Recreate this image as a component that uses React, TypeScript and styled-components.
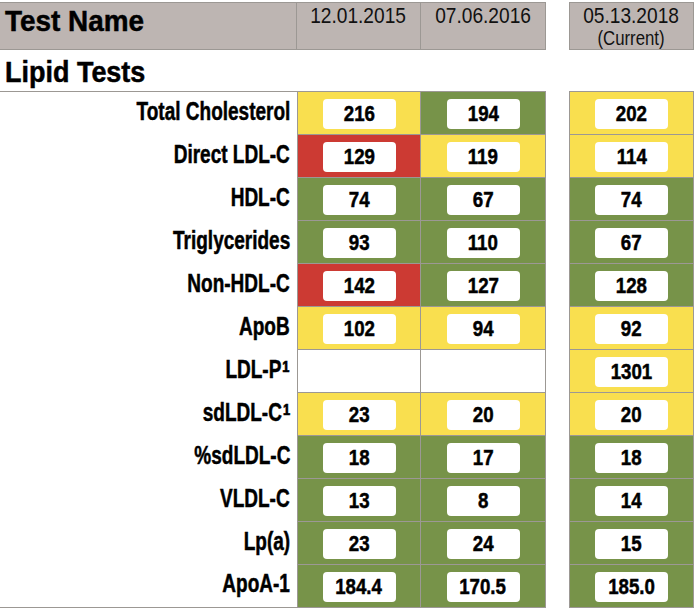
import React from "react";
import styled, { createGlobalStyle } from "styled-components";

const FONT = `"Liberation Sans", Arial, sans-serif`;
const LINE = "#9c9894";
const HEAD_BG = "#bdb5b2";

const colors: Record<string, string> = {
  y: "#f9df4f",
  g: "#779349",
  r: "#cc3a33",
  w: "#ffffff",
};

const Global = createGlobalStyle`
  html, body { margin: 0; padding: 0; background: #fff; }
  body { font-family: ${FONT}; color: #000; }
`;

/* Simulates the condensed face of the original by narrowing glyphs horizontally */
const Narrow = styled.span<{ $scale: number; $origin: string }>`
  display: inline-block;
  white-space: nowrap;
  transform: scaleX(${(p) => p.$scale});
  transform-origin: ${(p) => p.$origin} center;
`;

const Sup = styled.span`
  font-size: 31px;
  line-height: 0;
  vertical-align: -4px;
  margin-left: 1px;
`;

const Sheet = styled.div`
  width: 694px;
  height: 608px;
  overflow: hidden;
  padding-top: 2px;
  box-sizing: border-box;
  display: grid;
  grid-template-columns: 297px 124px 125px 23px 125px;
  grid-template-rows: 48px 42px repeat(12, 43px);
`;

const HeadTitle = styled.div`
  background: ${HEAD_BG};
  border-top: 1px solid ${LINE};
  border-bottom: 1px solid ${LINE};
  border-right: 1px solid ${LINE};
  box-sizing: border-box;
  font-weight: 700;
  font-size: 30px;
  line-height: 33px;
  padding: 1px 0 0 5px;
  -webkit-text-stroke: 0.5px #000;
`;

const HeadDate = styled.div<{ $first?: boolean }>`
  background: ${HEAD_BG};
  border-top: 1px solid ${LINE};
  border-bottom: 1px solid ${LINE};
  border-right: 1px solid ${LINE};
  border-left: ${(p) => (p.$first ? `1px solid ${LINE}` : "none")};
  box-sizing: border-box;
  font-size: 22px;
  line-height: 22px;
  padding-top: 2px;
  display: flex;
  flex-direction: column;
  align-items: center;
  color: #111;
`;

const SubNote = styled.div`
  font-size: 19.5px;
  line-height: 22px;
`;

const Spacer = styled.div``;

const Section = styled.div<{ $span: string }>`
  grid-column: ${(p) => p.$span};
  border-bottom: 1px solid ${LINE};
  box-sizing: border-box;
  font-weight: 700;
  font-size: 29px;
  line-height: 32px;
  padding: 6px 0 0 5px;
  -webkit-text-stroke: 0.5px #000;
`;

const Label = styled.div<{ $last?: boolean }>`
  display: flex;
  align-items: center;
  justify-content: flex-end;
  padding-right: 7px;
  padding-bottom: 5px;
  box-sizing: border-box;
  font-weight: 700;
  font-size: 25px;
  -webkit-text-stroke: 0.5px #000;
  border-bottom: ${(p) => (p.$last ? `1px solid ${LINE}` : "none")};
`;

const Cell = styled.div<{ $bg: string; $left?: boolean }>`
  background: ${(p) => p.$bg};
  border-right: 1px solid ${LINE};
  border-bottom: 1px solid ${LINE};
  border-left: ${(p) => (p.$left ? `1px solid ${LINE}` : "none")};
  box-sizing: border-box;
  display: flex;
  align-items: center;
  justify-content: center;
`;

const Value = styled.div`
  width: 73px;
  height: 30px;
  margin-top: 1px;
  background: #fff;
  border-radius: 4px;
  display: flex;
  align-items: center;
  justify-content: center;
  font-weight: 700;
  font-size: 22px;
  -webkit-text-stroke: 0.5px #000;
`;

type Row = { name: string; note?: boolean; vals: [string, string][] };

const rows: Row[] = [
  { name: "Total Cholesterol", vals: [["y", "216"], ["g", "194"], ["y", "202"]] },
  { name: "Direct LDL-C", vals: [["r", "129"], ["y", "119"], ["y", "114"]] },
  { name: "HDL-C", vals: [["g", "74"], ["g", "67"], ["g", "74"]] },
  { name: "Triglycerides", vals: [["g", "93"], ["g", "110"], ["g", "67"]] },
  { name: "Non-HDL-C", vals: [["r", "142"], ["g", "127"], ["g", "128"]] },
  { name: "ApoB", vals: [["y", "102"], ["y", "94"], ["y", "92"]] },
  { name: "LDL-P", note: true, vals: [["w", ""], ["w", ""], ["y", "1301"]] },
  { name: "sdLDL-C", note: true, vals: [["y", "23"], ["y", "20"], ["y", "20"]] },
  { name: "%sdLDL-C", vals: [["g", "18"], ["g", "17"], ["g", "18"]] },
  { name: "VLDL-C", vals: [["g", "13"], ["g", "8"], ["g", "14"]] },
  { name: "Lp(a)", vals: [["g", "23"], ["g", "24"], ["g", "15"]] },
  { name: "ApoA-1", vals: [["g", "184.4"], ["g", "170.5"], ["g", "185.0"]] },
];

function ValueCell({ bg, value, left }: { bg: string; value: string; left?: boolean }) {
  return (
    <Cell $bg={colors[bg]} $left={left}>
      {value && (
        <Value>
          <Narrow $scale={0.85} $origin="center">{value}</Narrow>
        </Value>
      )}
    </Cell>
  );
}

export default function App() {
  return (
    <>
      <Global />
      <Sheet>
        <HeadTitle>
          <Narrow $scale={0.93} $origin="left">Test Name</Narrow>
        </HeadTitle>
        <HeadDate>
          <Narrow $scale={0.87} $origin="center">12.01.2015</Narrow>
        </HeadDate>
        <HeadDate>
          <Narrow $scale={0.87} $origin="center">07.06.2016</Narrow>
        </HeadDate>
        <Spacer />
        <HeadDate $first>
          <Narrow $scale={0.87} $origin="center">05.13.2018</Narrow>
          <SubNote>
            <Narrow $scale={0.86} $origin="center">(Current)</Narrow>
          </SubNote>
        </HeadDate>

        <Section $span="1 / 4">
          <Narrow $scale={0.93} $origin="left">Lipid Tests</Narrow>
        </Section>
        <Spacer />
        <Section $span="5 / 6" />

        {rows.map((r, i) => (
          <React.Fragment key={r.name}>
            <Label $last={i === rows.length - 1}>
              <Narrow $scale={0.76} $origin="right">
                {r.name}
                {r.note && <Sup>¹</Sup>}
              </Narrow>
            </Label>
            <ValueCell bg={r.vals[0][0]} value={r.vals[0][1]} left />
            <ValueCell bg={r.vals[1][0]} value={r.vals[1][1]} />
            <Spacer />
            <ValueCell bg={r.vals[2][0]} value={r.vals[2][1]} left />
          </React.Fragment>
        ))}
      </Sheet>
    </>
  );
}
